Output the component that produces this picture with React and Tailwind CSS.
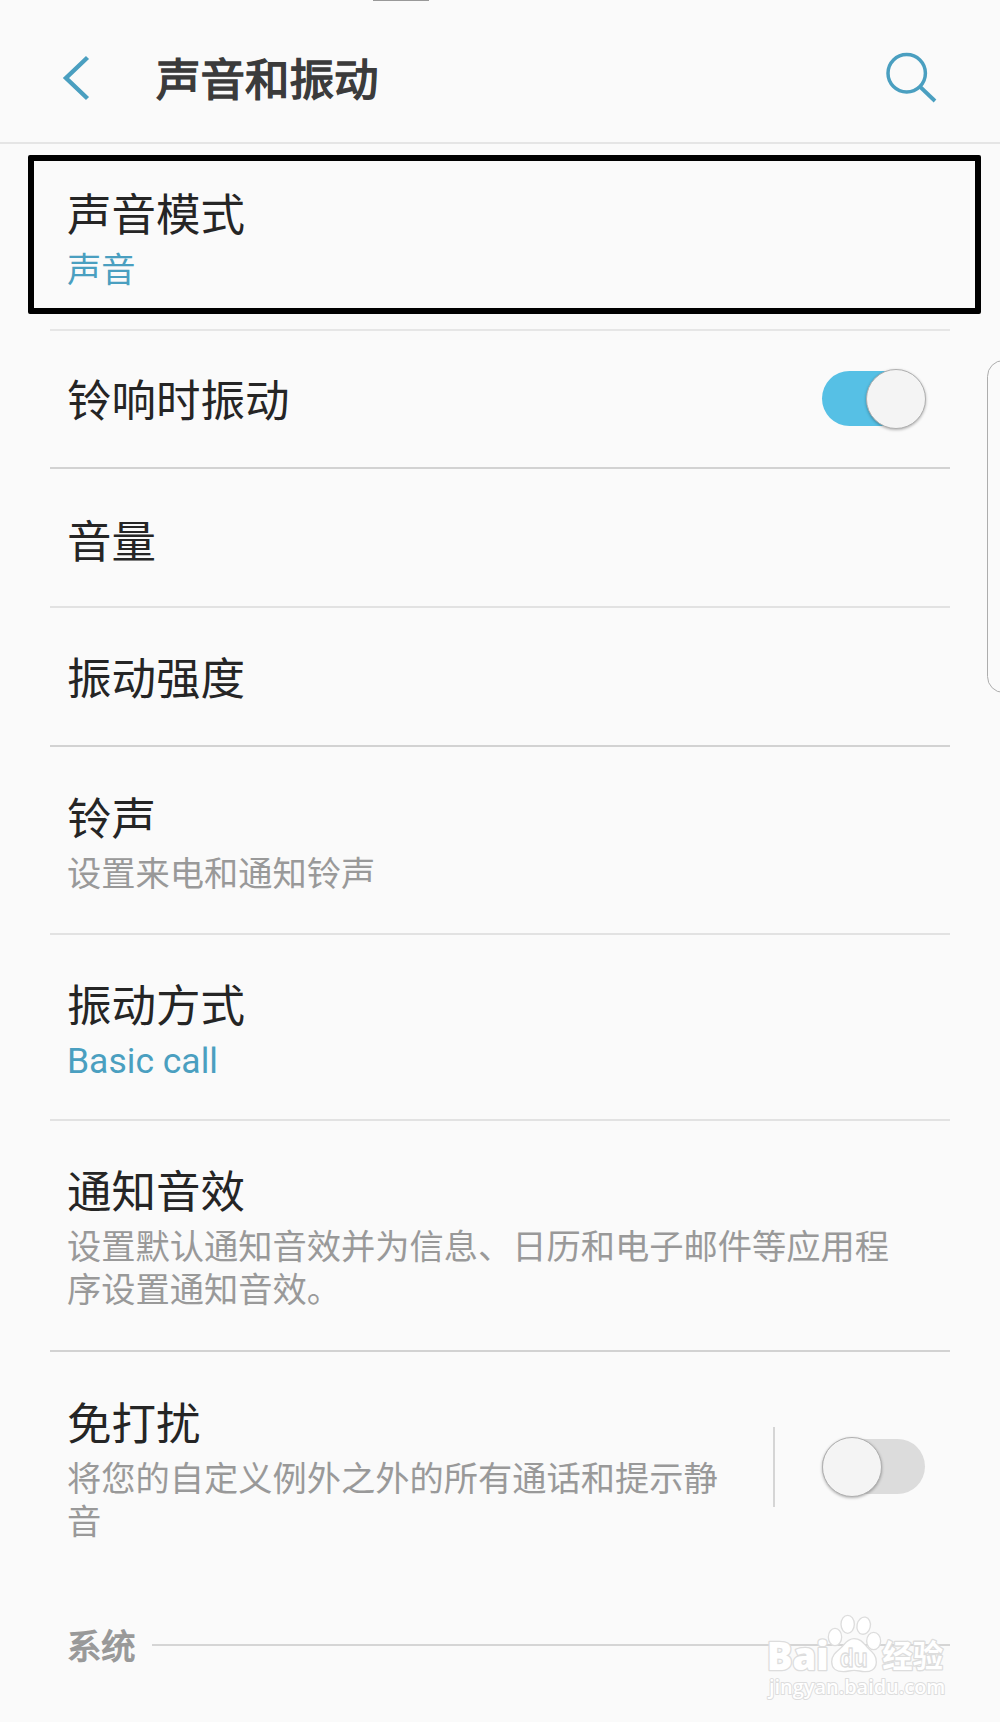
import { useState } from "react";

const ITEMS = [
  { id: "mode", title: "声音模式", value: "声音", row: "h-[187px] pt-[39px] border-[#e6e6e6]", highlighted: true },
  { id: "vibrate-ring", title: "铃响时振动", toggle: true, row: "h-[138px] pt-[38px] border-[#d2d2d2]" },
  { id: "volume", title: "音量", row: "h-[139px] pt-[41px] border-[#e2e2e2]" },
  { id: "intensity", title: "振动强度", row: "h-[139px] pt-[39px] border-[#d2d2d2]" },
  { id: "ringtone", title: "铃声", desc: "设置来电和通知铃声", row: "h-[188px] pt-[40px] border-[#e2e2e2]" },
  { id: "pattern", title: "振动方式", value: "Basic call", latin: true, row: "h-[186px] pt-[39px] border-[#e2e2e2]" },
  {
    id: "notification",
    title: "通知音效",
    desc: "设置默认通知音效并为信息、日历和电子邮件等应用程序设置通知音效。",
    row: "h-[231px] pt-[39px] border-[#d2d2d2]",
  },
  {
    id: "dnd",
    title: "免打扰",
    desc: "将您的自定义例外之外的所有通话和提示静音",
    toggle: true,
    separated: true,
    row: "h-[246px] pt-[40px] border-transparent",
  },
];

function Switch({ on, onChange }) {
  return (
    <button
      role="switch"
      aria-checked={on}
      onClick={onChange}
      className={`flex h-[60px] w-[104px] shrink-0 items-center rounded-full ${on ? "justify-end" : "justify-start"} relative`}
    >
      <span className={`absolute left-0 top-[2px] h-[55px] w-[103px] rounded-full ${on ? "bg-[#56c0e5]" : "bg-[#dcdcdc]"}`} />
      <span className="relative size-[60px] rounded-full border border-[#b0b0b0] bg-[#f4f4f4] shadow-[0_1px_3px_rgba(0,0,0,0.3)]" />
    </button>
  );
}

function Header() {
  return (
    <header className="flex h-[144px] shrink-0 items-start border-b-2 border-[#e5e5e5]">
      <svg className="ml-[60px] mt-[54px] h-[48px] w-[32px]" viewBox="0 0 32 48" fill="none" stroke="#4a9fc0" strokeWidth="4.4">
        <path d="M27.5 3.5 6 24l21.5 20.5" />
      </svg>
      <h1 className="ml-[64px] mt-[51px] text-[44.5px] leading-[60px] text-[#3b3b3b] [-webkit-text-stroke:1.5px_#3b3b3b]">声音和振动</h1>
      <svg className="ml-auto mr-[60px] mt-[50px] size-[56px]" viewBox="0 0 56 56" fill="none" stroke="#4a9fc0" strokeWidth="3.5">
        <circle cx="22.7" cy="23.3" r="18.7" />
        <path d="M36.3 37 51 51" strokeWidth="3.8" />
      </svg>
    </header>
  );
}

function SettingRow({ item, on, onToggle }) {
  return (
    <div className={`relative mx-[50px] flex shrink-0 border-b-2 pl-[17px] ${item.row}`}>
      {item.highlighted && (
        <div className="absolute -left-[22px] top-[11px] h-[159px] w-[953px] rounded-[2px] border-[6.5px] border-black" />
      )}
      <div className={item.separated ? "w-[670px]" : "w-[830px]"}>
        <p className="text-[44.5px] leading-[66px] text-[#252525]">{item.title}</p>
        {item.value && (
          <p className={`leading-[43px] text-[#4a9fc0] ${item.latin ? "text-[35.5px]" : "text-[34.25px]"}`}>{item.value}</p>
        )}
        {item.desc && <p className="text-[34.25px] leading-[43px] text-[#999999]">{item.desc}</p>}
      </div>
      {item.toggle && (
        <div className={`ml-auto flex items-center self-start pr-[24px] ${item.separated ? "mt-[35px] gap-[47px]" : ""}`}>
          {item.separated && <div className="h-[80px] w-[2px] bg-[#d5d5d5]" />}
          <Switch on={on} onChange={onToggle} />
        </div>
      )}
    </div>
  );
}

function Watermark() {
  return (
    <svg
      className="pointer-events-none absolute bottom-0 right-0 h-[132px] w-[260px]"
      viewBox="0 0 780 396"
      fill="#ffffff"
      stroke="#dddddd"
      strokeWidth="4"
      strokeLinejoin="round"
    >
      <g paintOrder="stroke" strokeWidth="8">
        <text x="80" y="241" fontSize="114" fontWeight="800" fontFamily="Open Sans" textLength="186" lengthAdjust="spacingAndGlyphs">Bai</text>
        <text x="427" y="232" fontSize="92" fontWeight="700" fontFamily="Noto Sans CJK SC" textLength="182" lengthAdjust="spacingAndGlyphs">经验</text>
        <text x="87" y="313" fontSize="61" fontWeight="600" fontFamily="Open Sans" strokeWidth="6" textLength="529" lengthAdjust="spacingAndGlyphs">jingyan.baidu.com</text>
      </g>
      <ellipse cx="285" cy="141" rx="20" ry="26" />
      <ellipse cx="323" cy="103" rx="20" ry="27" />
      <ellipse cx="371" cy="107" rx="20" ry="26" transform="rotate(12 371 107)" />
      <ellipse cx="401" cy="153" rx="21" ry="26" />
      <path d="M342 146c22 0 29 15 42 28 15 14 25 23 25 42 0 24-20 30-36 29-12-1-20-4-31-4s-20 4-32 4c-18 0-35-8-35-30 0-19 13-29 27-41 13-12 20-28 40-28z" />
      <text x="299" y="230" fontSize="76" fontWeight="700" fontFamily="Liberation Sans" textLength="84" lengthAdjust="spacingAndGlyphs">du</text>
    </svg>
  );
}

export default function App() {
  const [enabled, setEnabled] = useState({ "vibrate-ring": true, dnd: false });

  const toggle = (id) => setEnabled((prev) => ({ ...prev, [id]: !prev[id] }));

  return (
    <div className="relative flex h-[1722px] w-[1000px] flex-col overflow-hidden bg-[#fafafa] font-['Roboto','Noto_Sans_CJK_SC',sans-serif]">
      {/* Notch of the status bar */}
      <div className="absolute left-[373px] top-0 h-px w-[56px] bg-[#999999]" />

      <Header />

      {ITEMS.map((item) => (
        <SettingRow key={item.id} item={item} on={enabled[item.id]} onToggle={() => toggle(item.id)} />
      ))}

      {/* Section heading */}
      <div className="mx-[50px] mt-[17px] flex items-center gap-[16px] pl-[17px]">
        <h2 className="pt-[5px] text-[34.25px] leading-[55px] text-[#999999] [-webkit-text-stroke:1.3px_#999999]">系统</h2>
        <div className="h-[2px] flex-1 bg-[#d5d5d5]" />
      </div>

      {/* Edge panel handle */}
      <div className="absolute -right-[20px] top-[360px] h-[333px] w-[33px] rounded-[20px] border-[1.5px] border-[#adadad]" />

      <Watermark />
    </div>
  );
}
